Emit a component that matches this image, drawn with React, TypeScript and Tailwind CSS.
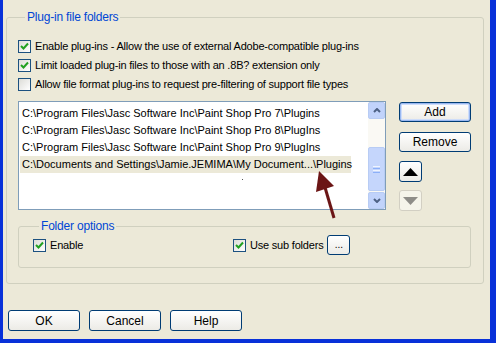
import type { ReactNode } from 'react'

const paths = [
  'C:\\Program Files\\Jasc Software Inc\\Paint Shop Pro 7\\Plugins',
  'C:\\Program Files\\Jasc Software Inc\\Paint Shop Pro 8\\PlugIns',
  'C:\\Program Files\\Jasc Software Inc\\Paint Shop Pro 9\\PlugIns',
  'C:\\Documents and Settings\\Jamie.JEMIMA\\My Document...\\Plugins',
]

function CheckBox({ checked }: { checked: boolean }) {
  return (
    <span className="w-[13px] h-[13px] shrink-0 border border-[#1C5180] bg-gradient-to-br from-[#DCDCD7] to-white flex items-center justify-center">
      {checked && (
        <svg width="9" height="9" viewBox="0 0 9 9">
          <path d="M1 4 L3.5 6.5 L8 1.5" stroke="#21A121" strokeWidth="2" fill="none" />
        </svg>
      )}
    </span>
  )
}

function Check({ checked, children }: { checked: boolean; children: ReactNode }) {
  return (
    <div className="flex items-center h-[13px] gap-[4px]">
      <CheckBox checked={checked} />
      <span className="leading-none tracking-[-0.2px]">{children}</span>
    </div>
  )
}

function XpButton({ children, className = '' }: { children: ReactNode; className?: string }) {
  return (
    <button
      className={`h-[20px] rounded-[3px] border border-[#003C74] bg-gradient-to-b from-white to-[#ECEBE6] flex items-center justify-center leading-none ${className}`}
    >
      {children}
    </button>
  )
}

export default function App() {
  return (
    <div
      className="relative w-[496px] h-[343px] bg-[#ECE9D8] border-l-[3px] border-r-[6px] border-b-[4px] border-[#0831D9] text-[11px] text-black overflow-hidden"
      style={{ fontFamily: '"Liberation Sans", Arial, sans-serif' }}
    >
      {/* Plug-in file folders */}
      <fieldset className="mt-[10px] ml-[3px] w-[478px] h-[274px] border border-[#D0D0BF] rounded-[3px] pl-[11px] pr-[12px]">
        <legend className="ml-[7px] px-[2px] text-[#0046D5] h-[14px] leading-[14px] text-[12px] tracking-[-0.2px]">Plug-in file folders</legend>

        <div className="mt-[16px] flex flex-col gap-[6px]">
          <Check checked>Enable plug-ins - Allow the use of external Adobe-compatible plug-ins</Check>
          <Check checked>Limit loaded plug-in files to those with an .8B? extension only</Check>
          <Check checked={false}>Allow file format plug-ins to request pre-filtering of support file types</Check>
        </div>

        <div className="mt-[10px] flex gap-[13px]">
          {/* list box */}
          <div className="w-[368px] h-[109px] border border-[#7F9DB9] bg-white flex">
            <div className="flex-1 pt-[3px] pl-[1px]">
              {paths.map((p, i) => (
                <div
                  key={p}
                  className={`h-[17px] leading-[17px] px-[2px] whitespace-nowrap ${i === 3 ? 'bg-[#ECE9D8] w-[331px]' : ''}`}
                >
                  {p}
                </div>
              ))}
              <div className="ml-[222px] mt-[6px] w-[1px] h-[1px] bg-[#555]" />
            </div>
            {/* scrollbar */}
            <div className="w-[17px] bg-[#FAF9F4] flex flex-col">
              <div className="h-[17px] rounded-[2px] border border-[#B8CCF4] bg-[#C1D3FB] flex items-center justify-center">
                <svg width="8" height="5" viewBox="0 0 8 5">
                  <path d="M1 4 L4 1 L7 4" stroke="#4D6185" strokeWidth="2" fill="none" />
                </svg>
              </div>
              <div className="flex-1 flex flex-col justify-end pb-[1px]">
                <div className="h-[44px] rounded-[2px] border border-[#B8CCF4] bg-[#C5D6FC] flex flex-col items-center justify-center gap-[1px]">
                  <span className="w-[7px] h-[1px] bg-[#EEF4FE]" />
                  <span className="w-[7px] h-[1px] bg-[#8CB0F8]" />
                  <span className="w-[7px] h-[1px] bg-[#EEF4FE]" />
                  <span className="w-[7px] h-[1px] bg-[#8CB0F8]" />
                </div>
              </div>
              <div className="h-[17px] rounded-[2px] border border-[#B8CCF4] bg-[#C1D3FB] flex items-center justify-center">
                <svg width="8" height="5" viewBox="0 0 8 5">
                  <path d="M1 1 L4 4 L7 1" stroke="#4D6185" strokeWidth="2" fill="none" />
                </svg>
              </div>
            </div>
          </div>

          {/* side buttons */}
          <div className="flex flex-col pt-[1px]">
            <XpButton className="w-[72px] text-[12px] border-[#003C74] shadow-[inset_0_0_0_1px_#99B8F1,inset_0_0_0_2px_#CEDDFA]">Add</XpButton>
            <XpButton className="w-[72px] mt-[10px] text-[12px]">Remove</XpButton>
            <XpButton className="w-[23px] h-[21px] mt-[9px]">
              <svg width="15" height="8" viewBox="0 0 15 8">
                <path d="M7.5 0 L15 8 L0 8 Z" fill="#000" />
              </svg>
            </XpButton>
            <button className="w-[23px] h-[21px] mt-[8px] rounded-[3px] border border-[#D2CFC3] bg-[#F5F4EA] flex items-center justify-center">
              <svg width="15" height="8" viewBox="0 0 15 8">
                <path d="M0 0 L15 0 L7.5 8 Z" fill="#8E8D88" />
              </svg>
            </button>
          </div>
        </div>

        {/* Folder options */}
        <fieldset className="mt-[8px] w-[453px] h-[49px] border border-[#D0D0BF] rounded-[3px] pl-[14px]">
          <legend className="ml-[6px] px-[2px] text-[#0046D5] h-[14px] leading-[14px] text-[12px] tracking-[-0.2px]">Folder options</legend>
          <div className="mt-[2px] flex items-center">
            <div className="w-[200px]">
              <Check checked>Enable</Check>
            </div>
            <Check checked>Use sub folders</Check>
            <XpButton className="w-[23px] h-[17px] ml-[4px] text-[10px]">...</XpButton>
          </div>
        </fieldset>
      </fieldset>

      {/* dialog buttons */}
      <div className="mt-[26px] ml-[5px] flex gap-[9px] text-[12px]">
        <XpButton className="w-[72px] h-[21px]">OK</XpButton>
        <XpButton className="w-[72px] h-[21px]">Cancel</XpButton>
        <XpButton className="w-[72px] h-[21px]">Help</XpButton>
      </div>

      {/* annotation arrow */}
      <svg className="absolute left-[307px] top-[166px]" width="34" height="56" viewBox="0 0 34 56">
        <path d="M24 52 L14 18" stroke="#6B1515" strokeWidth="3" fill="none" />
        <path d="M9 5 L6 26 L24 20 Z" fill="#6B1515" />
      </svg>
    </div>
  )
}
